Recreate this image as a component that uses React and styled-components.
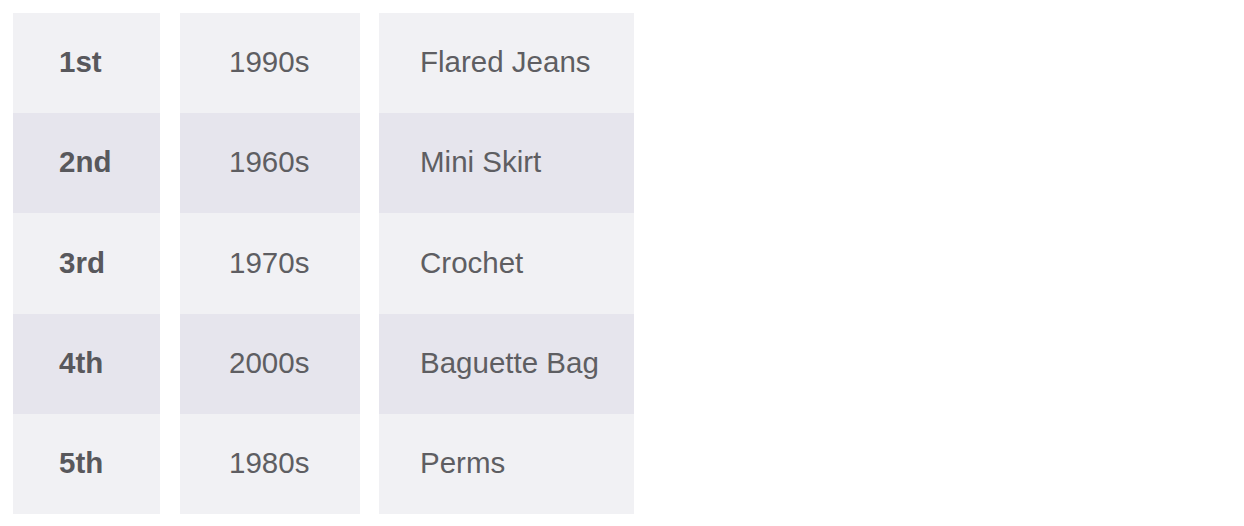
import React from "react";
import styled, { createGlobalStyle } from "styled-components";

const Global = createGlobalStyle`
  html, body { margin: 0; padding: 0; background: #ffffff; }
  body { font-family: "Liberation Sans", Arial, sans-serif; }
`;

const Board = styled.div`
  display: flex;
  align-items: flex-start;
  padding: 13px 0 0 13px;
  gap: 20px;
`;

const Column = styled.div`
  display: flex;
  flex-direction: column;
  width: ${(p) => p.$w}px;
  height: 501px;
  margin-left: ${(p) => p.$ml || 0}px;
`;

const Cell = styled.div`
  flex: 1;
  display: flex;
  align-items: center;
  padding-left: ${(p) => p.$pl}px;
  padding-bottom: 2px;
  box-sizing: border-box;
  background: ${(p) => (p.$alt ? "#e6e5ed" : "#f1f1f4")};
  color: ${(p) => (p.$bold ? "#58585c" : "#5e5e62")};
  font-size: 29.5px;
  font-weight: ${(p) => (p.$bold ? 700 : 400)};
  white-space: nowrap;
`;

const ranks = ["1st", "2nd", "3rd", "4th", "5th"];
const decades = ["1990s", "1960s", "1970s", "2000s", "1980s"];
const trends = ["Flared Jeans", "Mini Skirt", "Crochet", "Baguette Bag", "Perms"];

export default function App() {
  return (
    <>
      <Global />
      <Board>
        <Column $w={147}>
          {ranks.map((r, i) => (
            <Cell key={r} $alt={i % 2 === 1} $bold $pl={46}>
              {r}
            </Cell>
          ))}
        </Column>
        <Column $w={180}>
          {decades.map((d, i) => (
            <Cell key={d} $alt={i % 2 === 1} $pl={49}>
              {d}
            </Cell>
          ))}
        </Column>
        <Column $w={255} $ml={-1}>
          {trends.map((t, i) => (
            <Cell key={t} $alt={i % 2 === 1} $pl={41}>
              {t}
            </Cell>
          ))}
        </Column>
      </Board>
    </>
  );
}
